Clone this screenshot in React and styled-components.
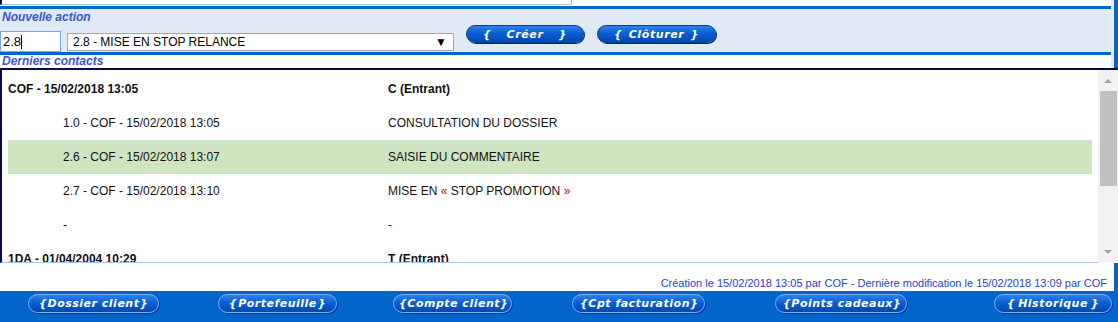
import React from 'react'
import styled, { createGlobalStyle } from 'styled-components'

const Global = createGlobalStyle`
  html, body { margin: 0; padding: 0; background: #fff; }
  body { font-family: "Liberation Sans", Arial, sans-serif; font-size: 12px; color: #111; }
`

const Page = styled.div`
  width: 1118px;
  height: 322px;
  display: flex;
  flex-direction: column;
  overflow: hidden;
`

const TopFrame = styled.div`
  display: flex;
`

const TopMain = styled.div`
  flex: 1;
  display: flex;
  flex-direction: column;
`

const Edge = styled.div`
  width: 3px;
  background: #e6eef8;
  border-right: 4px solid #0066cc;
`

const Stub = styled.div`
  width: 569px;
  height: 4px;
  border: 1px solid #a9c6ee;
  border-top: none;
  border-left: 2px solid #0a1050;
  margin-bottom: 1px;
`

const ActionPanel = styled.div`
  height: 43px;
  background: #e0eaf6;
  border-top: 3px solid #0066cc;
  border-bottom: 3px solid #0066cc;
  display: flex;
  flex-direction: column;
`

const Legend = styled.div`
  height: ${p => p.$h}px;
  line-height: ${p => p.$h}px;
  padding-left: 2px;
  font-weight: bold;
  font-style: italic;
  font-size: 12px;
  color: #3a56d0;
`

const ControlRow = styled.div`
  flex: 1;
  display: flex;
  align-items: stretch;
`

const Fields = styled.div`
  align-self: flex-end;
  display: flex;
  align-items: center;
  gap: 6px;
  height: 21px;
`

const CodeInput = styled.div`
  box-sizing: border-box;
  width: 61px;
  height: 21px;
  border: 1px solid #7fa6dc;
  background: #fff;
  display: flex;
  align-items: center;
  padding-left: 2px;
  font-size: 13px;
  color: #000;
  &::after {
    content: '';
    width: 1px;
    height: 14px;
    background: #000;
  }
`

const Select = styled.div`
  box-sizing: border-box;
  width: 387px;
  height: 18px;
  margin-top: 1px;
  border: 1px solid #a6a6a6;
  background: #fff;
  display: flex;
  align-items: center;
  justify-content: space-between;
  padding: 0 6px 0 5px;
  font-size: 12px;
  color: #000;
`

const Arrow = styled.span`
  font-size: 12px;
  line-height: 12px;
  color: #000;
`

const Actions = styled.div`
  align-self: flex-start;
  display: flex;
  gap: 13px;
  margin-left: 12px;
`

const Pill = styled.div`
  box-sizing: border-box;
  width: ${p => p.$w}px;
  height: ${p => p.$h}px;
  border-radius: 10px;
  background: linear-gradient(#2f80e8 0%, #0a5fd4 45%, #0049b0 100%);
  border: 1px solid ${p => (p.$light ? '#7cb2f0' : '#0a3e96')};
  box-shadow: 1px 1px 0 ${p => (p.$light ? '#00389a' : '#032a70')};
  display: flex;
  align-items: center;
  justify-content: space-between;
  padding: 0 ${p => p.$pad}px;
  font-family: "DejaVu Sans", Verdana, sans-serif;
  font-weight: bold;
  font-style: italic;
  font-size: ${p => p.$fs}px;
  letter-spacing: ${p => p.$ls}px;
  color: #fff;
  white-space: nowrap;
`

const ListFrame = styled.div`
  height: 193px;
  display: flex;
  border-top: 2px solid #0a0a48;
`

const Rows = styled.div`
  flex: 1;
  padding: 2px 6px 0 6px;
  border-left: 2px solid #0a0a48;
  border-bottom: 1px solid #a9c6ee;
  overflow: hidden;
`

const Row = styled.div`
  height: 34px;
  display: grid;
  grid-template-columns: 380px 1fr;
  align-items: center;
  background: ${p => (p.$hl ? '#cfe5c1' : 'transparent')};
  font-weight: ${p => (p.$head ? 'bold' : 'normal')};
  color: #111;
`

const Cell = styled.span`
  padding-left: ${p => p.$indent || 0}px;
`

const Quote = styled.span`
  color: #b01010;
`

const Scrollbar = styled.div`
  width: 20px;
  height: 192px;
  background: #f1f1f1;
  display: flex;
  flex-direction: column;
  align-items: center;
`

const ScrollBtn = styled.div`
  height: 21px;
  display: flex;
  align-items: center;
  justify-content: center;
  &::before {
    content: '';
    border-left: 4px solid transparent;
    border-right: 4px solid transparent;
    ${p => (p.$down ? 'border-top: 4px solid #a3a3a3;' : 'border-bottom: 4px solid #a3a3a3;')}
  }
`

const Thumb = styled.div`
  width: 17px;
  height: 95px;
  background: #c1c1c1;
`

const Spacer = styled.div`
  flex: 1;
`

const InfoBar = styled.div`
  height: 28px;
  display: flex;
  align-items: flex-end;
  justify-content: flex-end;
  padding-right: 7px;
  border-right: 4px solid #0066cc;
  font-size: 11px;
  color: #2b3fcf;
  line-height: 13px;
  padding-bottom: 1px;
  box-sizing: border-box;
`

const NavBar = styled.div`
  flex: 1;
  background: #0066cc;
  display: grid;
  grid-template-columns: 190px 175px 179px 203px 219px auto;
  padding: 3px 0 0 28px;
  align-items: start;
`

const contacts = [
  { head: true, left: 'COF - 15/02/2018 13:05', right: 'C (Entrant)' },
  { left: '1.0 - COF - 15/02/2018 13:05', right: 'CONSULTATION DU DOSSIER' },
  { hl: true, left: '2.6 - COF - 15/02/2018 13:07', right: 'SAISIE DU COMMENTAIRE' },
  { left: '2.7 - COF - 15/02/2018 13:10', quote: true },
  { left: '-', right: '-' },
  { head: true, left: '1DA - 01/04/2004 10:29', right: 'T (Entrant)' },
]

const navItems = [
  { label: 'Dossier client', w: 131, pad: 10 },
  { label: 'Portefeuille', w: 119, pad: 10 },
  { label: 'Compte client', w: 119, pad: 5 },
  { label: 'Cpt facturation', w: 133, pad: 7 },
  { label: 'Points cadeaux', w: 132, pad: 7 },
  { label: 'Historique', w: 118, pad: 12 },
]

function ActionButton({ label, w }) {
  return (
    <Pill $w={w} $h={18} $pad={16} $fs={11} $ls={0.6}>
      <span>{'{'}</span>
      <span>{label}</span>
      <span>{'}'}</span>
    </Pill>
  )
}

function NavButton({ label, w, pad }) {
  return (
    <Pill $w={w} $h={19} $pad={pad} $fs={11} $ls={0.5} $light>
      <span>{'{'}</span>
      <span>{label}</span>
      <span>{'}'}</span>
    </Pill>
  )
}

export default function App() {
  return (
    <>
      <Global />
      <Page>
        <TopFrame>
          <TopMain>
            <Stub />
            <ActionPanel>
              <Legend $h={16}>Nouvelle action</Legend>
              <ControlRow>
                <Fields>
                  <CodeInput>2.8</CodeInput>
                  <Select>
                    <span>2.8 - MISE EN STOP RELANCE</span>
                    <Arrow>▼</Arrow>
                  </Select>
                </Fields>
                <Actions>
                  <ActionButton label="Créer" w={118} />
                  <ActionButton label="Clôturer" w={119} />
                </Actions>
              </ControlRow>
            </ActionPanel>
            <Legend $h={13}>Derniers contacts</Legend>
          </TopMain>
          <Edge />
        </TopFrame>
        <ListFrame>
          <Rows>
            {contacts.map((c, i) => (
              <Row key={i} $head={c.head} $hl={c.hl}>
                <Cell $indent={c.head ? 0 : 55}>{c.left}</Cell>
                <Cell>
                  {c.quote ? (
                    <>MISE EN <Quote>«</Quote> STOP PROMOTION <Quote>»</Quote></>
                  ) : c.right}
                </Cell>
              </Row>
            ))}
          </Rows>
          <Scrollbar>
            <ScrollBtn />
            <Thumb />
            <Spacer />
            <ScrollBtn $down />
          </Scrollbar>
        </ListFrame>
        <InfoBar>
          Création le 15/02/2018 13:05 par COF - Dernière modification le 15/02/2018 13:09 par COF
        </InfoBar>
        <NavBar>
          {navItems.map(n => (
            <NavButton key={n.label} label={n.label} w={n.w} pad={n.pad} />
          ))}
        </NavBar>
      </Page>
    </>
  )
}
